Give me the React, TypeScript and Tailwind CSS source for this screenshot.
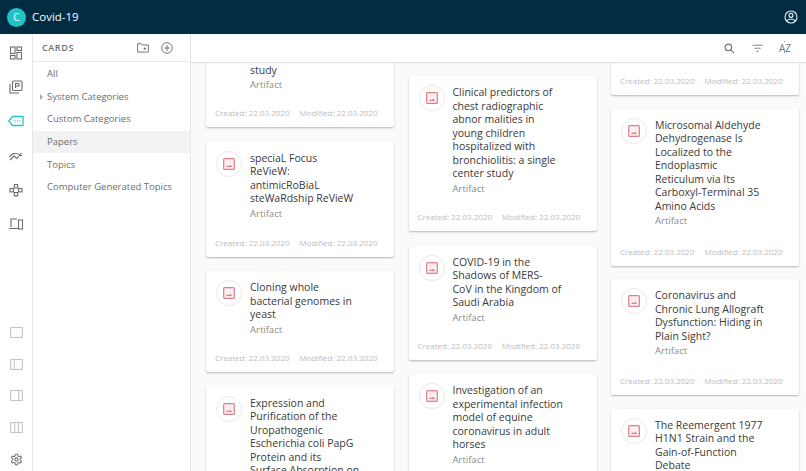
import React from "react";

const Pic = () => (
  <div className="w-[26px] h-[26px] rounded-full border border-[#f1e6e8] flex items-center justify-center shrink-0 bg-white">
    <svg width="12" height="12" viewBox="0 0 13 13" fill="none">
      <rect x="0.75" y="0.75" width="11.5" height="11.5" rx="1" fill="#fbeef0" stroke="#d9808a" strokeWidth="1.3" />
      <path d="M3 9.8 L5 7.8 L6.3 9 L7.8 7.3 L10 9.8Z" fill="#d9808a" />
    </svg>
  </div>
);

const Dates = () => (
  <div className="flex gap-[10px] text-[8px] leading-[10px] text-[#bdbdbd] pb-[9px] whitespace-nowrap">
    <span>Created: 22.03.2020</span>
    <span>Modified: 22.03.2020</span>
  </div>
);

const Card = ({ title, h, clip }: { title: string[]; h: number; clip?: boolean }) => (
  <div className="bg-white rounded-[2px] shadow-[0_1px_2px_rgba(0,0,0,0.28)] flex flex-col shrink-0 pl-[10px] pr-2 overflow-hidden" style={{ height: h }}>
    <div className="flex gap-[8px] pt-[9px] flex-1 min-h-0">
      <Pic />
      <div className="pt-[1px] min-w-0">
        {title.map((t, i) => (
          <div key={i} className="text-[10.5px] leading-[13.5px] text-[#3a3a3a] whitespace-nowrap">{t}</div>
        ))}
        <div className="text-[9.5px] leading-[14px] text-[#8a8a8a] mt-[1px]">Artifact</div>
      </div>
    </div>
    {!clip && <div className="-ml-[1px]"><Dates /></div>}
  </div>
);

const Stub = ({ h, lines }: { h: number; lines?: string[] }) => (
  <div className="bg-white rounded-[2px] shadow-[0_1px_2px_rgba(0,0,0,0.28)] flex flex-col justify-end shrink-0 pl-[9px] pr-2" style={{ height: h }}>
    {lines && (
      <div className="pl-[35px] pt-[2px] flex-1">
        {lines.map((t) => (
          <div key={t} className="text-[10.5px] leading-[13.5px] text-[#3a3a3a]">{t}</div>
        ))}
        <div className="text-[9.5px] leading-[14px] text-[#8a8a8a]">Artifact</div>
      </div>
    )}
    <Dates />
  </div>
);

const railStroke = "#6b6b6b";

const RailIcon = ({ children, active }: { children: React.ReactNode; active?: boolean }) => (
  <svg width="16" height="16" viewBox="0 0 16 16" fill="none" stroke={active ? "#2cc3c8" : railStroke} strokeWidth="1.1">
    {children}
  </svg>
);

const Layout = ({ children }: { children: React.ReactNode }) => (
  <svg width="13" height="11" viewBox="0 0 14 12" fill="none" stroke="#c4c4c4" strokeWidth="1.2">
    <rect x="0.6" y="0.6" width="12.8" height="10.8" />
    {children}
  </svg>
);

const items = ["All", "System Categories", "Custom Categories", "Papers", "Topics", "Computer Generated Topics"];

export default function App() {
  return (
    <div className="w-[806px] h-[471px] overflow-hidden flex flex-col bg-white font-['Open_Sans','Noto_Sans',sans-serif]">
      <header className="h-[34px] shrink-0 bg-[#022c42] flex items-center pl-[7px] pr-[8px]">
        <div className="w-[19px] h-[19px] rounded-full bg-[#22c3c6] text-white text-[10px] flex items-center justify-center">C</div>
        <span className="ml-[6px] text-white text-[11.5px]">Covid-19</span>
        <svg className="ml-auto" width="14" height="14" viewBox="0 0 14 14" fill="none" stroke="#e8eef0" strokeWidth="1.1">
          <circle cx="7" cy="7" r="6" />
          <circle cx="7" cy="5.4" r="2" />
          <path d="M2.8 10.6 C4 8.8 10 8.8 11.2 10.6" />
        </svg>
      </header>
      <div className="flex flex-1 min-h-0">
        <nav className="w-[33px] shrink-0 border-r border-[#e6e6e6] flex flex-col items-center bg-white">
          <div className="flex flex-col items-center gap-[18.2px] pt-[11px]">
            <RailIcon>
              <rect x="2.5" y="2" width="4.5" height="6.5" /><rect x="9" y="2" width="4.5" height="3.5" /><rect x="2.5" y="10.5" width="4.5" height="3.5" /><rect x="9" y="7.5" width="4.5" height="6.5" />
            </RailIcon>
            <RailIcon>
              <rect x="4.5" y="2" width="9.5" height="9.5" rx="1" /><path d="M2 5 V14 H11" /><path d="M7.5 9 V4.5 H11 V7 H8" />
            </RailIcon>
            <RailIcon active>
              <path d="M0.8 8 L4.5 3.5 H15 V12.5 H4.5 Z" strokeWidth="1.3" /><path d="M6.5 8 h1 M9 8 h1 M11.5 8 h1" strokeWidth="1.3" />
            </RailIcon>
            <RailIcon>
              <path d="M1.5 9 C4 4.5 9 4.5 14 8" /><path d="M2 12 L6 8 L9 10.5 L13.5 5" />
            </RailIcon>
            <RailIcon>
              <rect x="6.3" y="2.5" width="3.4" height="3.4" /><rect x="2" y="6.5" width="3.4" height="3.4" /><rect x="10.6" y="6.5" width="3.4" height="3.4" /><rect x="6.3" y="10.5" width="3.4" height="3.4" />
            </RailIcon>
            <RailIcon>
              <path d="M9 3 H3 V11 M1 12.5 H10" /><rect x="10.5" y="4" width="4" height="9" />
            </RailIcon>
          </div>
          <div className="mt-auto flex flex-col items-center gap-[20.5px] pb-[5px]">
            <Layout><></></Layout>
            <Layout><path d="M4.5 0.6 V11.4" /></Layout>
            <Layout><path d="M9.5 0.6 V11.4" /></Layout>
            <Layout><path d="M5 0.6 V11.4 M9 0.6 V11.4" /></Layout>
            <svg width="13" height="13" viewBox="0 0 24 24" fill="none" stroke="#6b6b6b" strokeWidth="1.9" strokeLinecap="round" strokeLinejoin="round">
              <path d="M12.22 2h-.44a2 2 0 0 0-2 2v.18a2 2 0 0 1-1 1.73l-.43.25a2 2 0 0 1-2 0l-.15-.08a2 2 0 0 0-2.73.73l-.22.38a2 2 0 0 0 .73 2.73l.15.1a2 2 0 0 1 1 1.72v.51a2 2 0 0 1-1 1.74l-.15.09a2 2 0 0 0-.73 2.73l.22.38a2 2 0 0 0 2.73.73l.15-.08a2 2 0 0 1 2 0l.43.25a2 2 0 0 1 1 1.73V20a2 2 0 0 0 2 2h.44a2 2 0 0 0 2-2v-.18a2 2 0 0 1 1-1.73l.43-.25a2 2 0 0 1 2 0l.15.08a2 2 0 0 0 2.73-.73l.22-.39a2 2 0 0 0-.73-2.73l-.15-.08a2 2 0 0 1-1-1.74v-.5a2 2 0 0 1 1-1.74l.15-.09a2 2 0 0 0 .73-2.73l-.22-.38a2 2 0 0 0-2.73-.73l-.15.08a2 2 0 0 1-2 0l-.43-.25a2 2 0 0 1-1-1.73V4a2 2 0 0 0-2-2z" />
              <circle cx="12" cy="12" r="3" />
            </svg>
          </div>
        </nav>
        <aside className="w-[158px] shrink-0 border-r border-[#e6e6e6] flex flex-col bg-white">
          <div className="h-[28px] border-b border-[#e8e8e8] flex items-center pl-[9px] pr-[17px] shrink-0">
            <span className="text-[9px] font-semibold tracking-[0.6px] text-[#6f6f6f]">CARDS</span>
            <svg className="ml-auto" width="12" height="10" viewBox="0 0 13 11" fill="none" stroke="#6b6b6b" strokeWidth="1">
              <path d="M0.6 10 V0.8 H4.5 L5.7 2.2 H12.4 V10 Z" />
              <path d="M8.5 4 L9 5.4 H10.4 L9.3 6.2 L9.7 7.6 L8.5 6.8 L7.3 7.6 L7.7 6.2 L6.6 5.4 H8 Z" fill="#6b6b6b" stroke="none" />
            </svg>
            <svg className="ml-[12px]" width="12" height="12" viewBox="0 0 12 12" fill="none" stroke="#6b6b6b" strokeWidth="0.9">
              <circle cx="6" cy="6" r="5.3" /><path d="M6 3 V9 M3 6 H9" />
            </svg>
          </div>
          <ul className="text-[9.5px] text-[#6d6d6d] pt-[1px]">
            {items.map((t) => (
              <li key={t} className={`relative h-[22.6px] flex items-center pl-[14px] ${t === "Papers" ? "bg-[#f2f2f2]" : ""}`}>
                {t === "System Categories" && <span className="absolute left-[7px] top-[8px] border-y-[3px] border-y-transparent border-l-[3px] border-l-[#aaaaaa]" />}
                {t}
              </li>
            ))}
          </ul>
        </aside>
        <main className="flex-1 min-w-0 flex flex-col bg-[#fafafa]">
          <div className="h-[28px] shrink-0 bg-white shadow-[0_1px_1px_rgba(0,0,0,0.1)] flex items-center justify-end pr-[15px] gap-[16px] relative z-10">
            <svg className="mr-[1px]" width="11" height="11" viewBox="0 0 12 12" fill="none" stroke="#777" strokeWidth="1.2"><circle cx="4.8" cy="4.8" r="3.6" /><path d="M7.5 7.5 L11 11" /></svg>
            <svg width="11" height="9" viewBox="0 0 12 9" fill="none" stroke="#888" strokeWidth="1.1"><path d="M0.5 1 H11.5 M2.5 4.2 H9.5 M4.5 7.5 H7.5" /></svg>
            <span className="relative text-[10px] leading-none text-[#777] w-[12px]">
              AZ
              <span className="absolute left-[5px] -top-[2px] w-[1px] h-[1px] bg-[#888]" />
              <span className="absolute left-[5px] bottom-[0px] w-[1px] h-[1px] bg-[#888]" />
            </span>
          </div>
          <div className="flex-1 min-h-0 overflow-hidden flex gap-[14.5px] pl-[15px] pr-[7px]">
            <div className="flex-1 flex flex-col gap-[14.5px]">
              <Stub h={65} lines={["study"]} />
              <Card h={115} title={["speciaL Focus", "ReVieW:", "antimicRoBiaL", "steWaRdship ReVieW"]} />
              <Card h={101} title={["Cloning whole", "bacterial genomes in", "yeast"]} />
              <Card h={110} clip title={["Expression and", "Purification of the", "Uropathogenic", "Escherichia coli PapG", "Protein and its", "Surface Absorption on"]} />
            </div>
            <div className="flex-1 flex flex-col gap-[14.5px] pt-[14px]">
              <Card h={155} title={["Clinical predictors of", "chest radiographic", "abnor malities in", "young children", "hospitalized with", "bronchiolitis: a single", "center study"]} />
              <Card h={114} title={["COVID-19 in the", "Shadows of MERS-", "CoV in the Kingdom of", "Saudi Arabia"]} />
              <Card h={114} clip title={["Investigation of an", "experimental infection", "model of equine", "coronavirus in adult", "horses"]} />
            </div>
            <div className="flex-1 flex flex-col gap-[13.5px]">
              <Stub h={33} />
              <Card h={157} title={["Microsomal Aldehyde", "Dehydrogenase Is", "Localized to the", "Endoplasmic", "Reticulum via Its", "Carboxyl-Terminal 35", "Amino Acids"]} />
              <Card h={116} title={["Coronavirus and", "Chronic Lung Allograft", "Dysfunction: Hiding in", "Plain Sight?"]} />
              <Card h={110} clip title={["The Reemergent 1977", "H1N1 Strain and the", "Gain-of-Function", "Debate"]} />
            </div>
          </div>
        </main>
      </div>
    </div>
  );
}
